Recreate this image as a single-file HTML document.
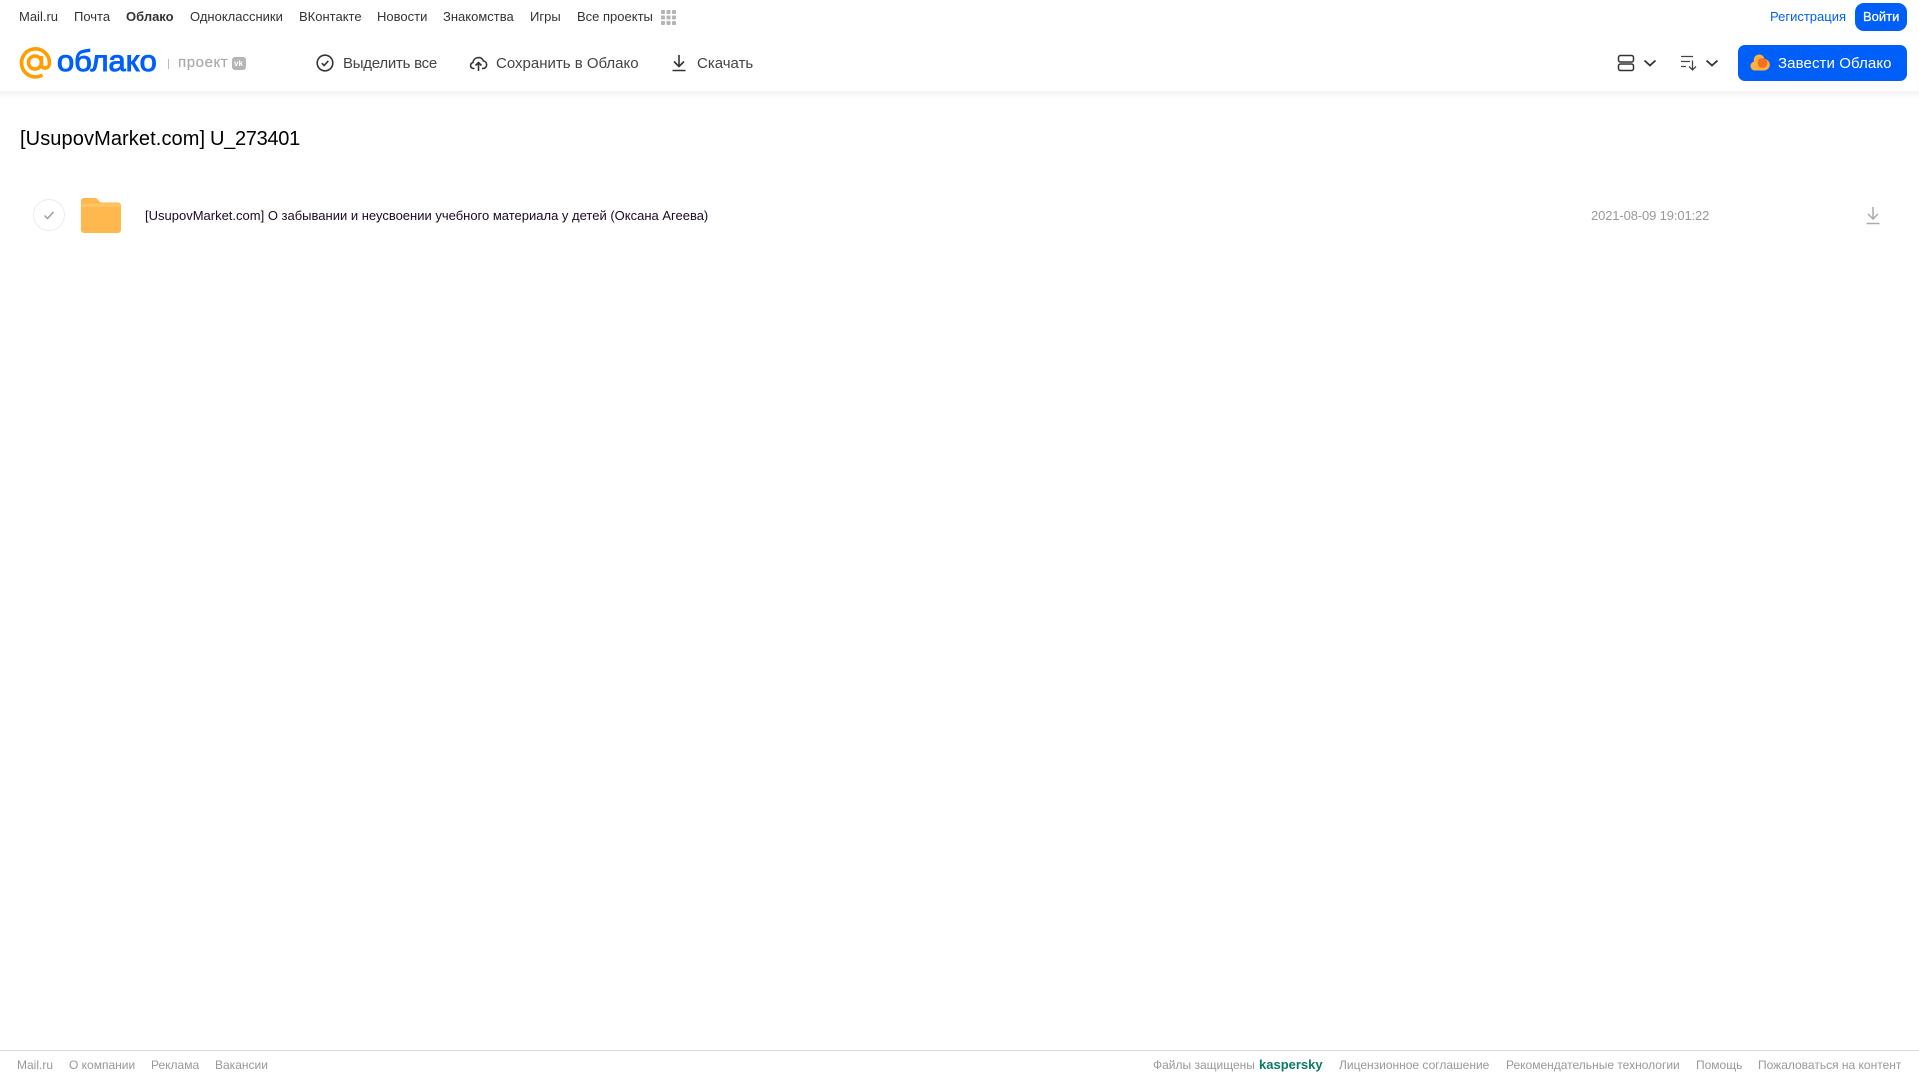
<!DOCTYPE html>
<html lang="ru">
<head>
<meta charset="utf-8">
<title>[UsupovMarket.com] U_273401</title>
<style>
html,body{margin:0;padding:0;background:#fff;width:1919px;height:1079px;overflow:hidden;font-family:"Liberation Sans",sans-serif}
.t{position:absolute;white-space:nowrap;line-height:20px;height:20px}
.n{top:7px;font-size:13px;color:#333}
.b{top:54px;font-size:15px;color:#444;letter-spacing:0}
.f{top:1055px;font-size:12px;color:#999}
svg{position:absolute;display:block}
#sh{position:absolute;left:0;top:91px;width:1919px;height:8px;background:linear-gradient(#f3f3f3,#fff)}
#line{position:absolute;left:0;top:1050px;width:1919px;height:1px;background:#d8d8d8}
.btn{position:absolute;background:#005ff9}
</style>
</head>
<body>
<div id="sh"></div>

<span class="t n" style="left:19px">Mail.ru</span>
<span class="t n" style="left:74px">Почта</span>
<span class="t n" style="left:126px;font-weight:bold">Облако</span>
<span class="t n" style="left:190px">Одноклассники</span>
<span class="t n" style="left:299px">ВКонтакте</span>
<span class="t n" style="left:377px">Новости</span>
<span class="t n" style="left:443px">Знакомства</span>
<span class="t n" style="left:530px">Игры</span>
<span class="t n" style="left:577px">Все проекты</span>
<svg style="left:661px;top:10px" width="15" height="15" viewBox="0 0 15 15" fill="#b4b4b4"><rect x="0" y="0" width="4" height="4" rx="1"/><rect x="5.500" y="0" width="4" height="4" rx="1"/><rect x="11" y="0" width="4" height="4" rx="1"/><rect x="0" y="5.500" width="4" height="4" rx="1"/><rect x="5.500" y="5.500" width="4" height="4" rx="1"/><rect x="11" y="5.500" width="4" height="4" rx="1"/><rect x="0" y="11" width="4" height="4" rx="1"/><rect x="5.500" y="11" width="4" height="4" rx="1"/><rect x="11" y="11" width="4" height="4" rx="1"/></svg>

<span class="t n" style="left:1770px;color:#005ff9">Регистрация</span>
<div class="btn" style="left:1855px;top:3px;width:52px;height:28px;border-radius:9px"></div>
<span class="t" style="left:1863px;top:7px;font-size:13px;color:#fff;-webkit-text-stroke:.25px #fff">Войти</span>

<svg style="left:19px;top:46px" width="33" height="34" viewBox="0 0 33 34" fill="none" stroke="#ff9e00" stroke-width="3.600"><circle cx="16" cy="16.500" r="6.500"/><path d="M22.500 10v8.500c0 5 8 5 8-1.500A14 14 0 1 0 23.500 29"/></svg>
<span class="t" style="left:57px;top:44px;height:36px;line-height:36px;font-size:30px;color:#005ff9;-webkit-text-stroke:1px #005ff9;transform:scaleX(1.03);transform-origin:0 50%">облако</span>
<div style="position:absolute;left:168px;top:59px;width:1px;height:10px;background:#bbb"></div>
<span class="t" style="left:178px;top:53px;font-size:15px;color:#aaa;letter-spacing:.6px;-webkit-text-stroke:.2px #aaa">проект</span>
<div style="position:absolute;left:232px;top:57px;width:14px;height:13px;border-radius:3px;background:#b5b5b5"></div>
<span class="t" style="left:234px;top:54px;font-size:8px;font-weight:bold;color:#fff">vk</span>

<svg style="left:316px;top:54px" width="18" height="18" viewBox="0 0 18 18" fill="none" stroke="#333" stroke-width="1.600"><circle cx="9" cy="9" r="7.800"/><path d="M5.800 9.200l2.300 2.300 4.200-4.600"/></svg>
<span class="t b" style="left:343px;letter-spacing:-.25px">Выделить все</span>

<svg style="left:469px;top:54px" width="19" height="18" viewBox="0 0 19 18" fill="none" stroke="#333" stroke-width="1.600"><path d="M5.500 14.500H4.500C1 14.500.5 9.500 4 8.500 4.500 3 12.500 1.500 14.500 7c4 .5 4.500 7-.5 7.500h-1"/><path d="M9.500 17V9M6.500 11.500l3-3 3 3"/></svg>
<span class="t b" style="left:496px">Сохранить в Облако</span>

<svg style="left:671px;top:54px" width="16" height="18" viewBox="0 0 16 18" fill="none" stroke="#333" stroke-width="1.600"><path d="M8 1v11M3 7.500l5 5 5-5M1.500 16.500h13"/></svg>
<span class="t b" style="left:697px">Скачать</span>

<svg style="left:1617px;top:54px" width="18" height="18" viewBox="0 0 18 18" fill="none" stroke="#333" stroke-width="1.500"><rect x="1.500" y="1.500" width="15" height="6.500" rx="2"/><rect x="1.500" y="10" width="15" height="6.500" rx="2"/></svg>
<svg style="left:1643px;top:59px" width="14" height="9" viewBox="0 0 14 9" fill="none" stroke="#333" stroke-width="1.800"><path d="M1.500 1.500L7 6.500l5.500-5"/></svg>
<svg style="left:1680px;top:54px" width="18" height="18" viewBox="0 0 18 18" fill="none" stroke="#444" stroke-width="1.300"><path d="M1 2.500h12M1 7.500h9M1 12.500h5M12.500 6.500v9.500M9 12.500l3.500 3.500 3.500-3.500"/></svg>
<svg style="left:1705px;top:59px" width="14" height="9" viewBox="0 0 14 9" fill="none" stroke="#333" stroke-width="1.800"><path d="M1.500 1.500L7 6.500l5.500-5"/></svg>

<div class="btn" style="left:1738px;top:45px;width:169px;height:36px;border-radius:7px"></div>
<svg style="left:1750px;top:54px" width="20" height="17" viewBox="0 0 20 17"><path fill="#ffb13d" d="M5 16.500A4.500 4.500 0 0 1 4 7.600 5.500 5.500 0 0 1 9 0.500c3 0 5 2 5.500 4.500A5.800 5.800 0 0 1 15 16.500z"/><circle cx="12.500" cy="9" r="5" fill="#f46f22"/></svg>
<span class="t" style="left:1778px;top:54px;font-size:15px;color:#fff;letter-spacing:.1px">Завести Облако</span>

<span class="t" style="left:20px;top:127px;height:24px;line-height:24px;font-size:20px;color:#000;letter-spacing:.1px">[UsupovMarket.com]</span>
<span class="t" style="left:210px;top:127px;height:24px;line-height:24px;font-size:20px;color:#000;letter-spacing:-.3px">U_273401</span>

<svg style="left:33px;top:199px" width="32" height="32" viewBox="0 0 32 32" fill="none"><circle cx="16" cy="16" r="15.500" stroke="#ececec"/><path d="M11.500 16.500l3 3 6-6.500" stroke="#999" stroke-width="1.400"/></svg>
<svg style="left:81px;top:198px" width="40" height="35" viewBox="0 0 40 35"><path fill="#ffb84d" d="M0 3a3 3 0 0 1 3-3h10c3 0 4 1.500 5 3 .6 1 1.500 1.500 3 1.500h16a3 3 0 0 1 3 3V32a3 3 0 0 1-3 3H3a3 3 0 0 1-3-3z"/><path fill="#ffc766" d="M0 8.500a3 3 0 0 1 3-3h34a3 3 0 0 1 3 3V9H0z" opacity=".7"/></svg>
<span class="t" style="left:145px;top:206px;font-size:13px;color:#1a0a26">[UsupovMarket.com] О забывании и неусвоении учебного материала у детей (Оксана Агеева)</span>
<span class="t" style="left:1591px;top:206px;font-size:13px;color:#999;letter-spacing:-.13px">2021-08-09 19:01:22</span>
<svg style="left:1865px;top:206px" width="16" height="19" viewBox="0 0 16 19" fill="none" stroke="#aaa" stroke-width="1.500"><path d="M8 1v12M3 8l5 5 5-5M1.500 17.500h13"/></svg>

<div id="line"></div>
<span class="t f" style="left:17px">Mail.ru</span>
<span class="t f" style="left:69px">О компании</span>
<span class="t f" style="left:151px">Реклама</span>
<span class="t f" style="left:215px">Вакансии</span>
<span class="t f" style="left:1153px">Файлы защищены</span>
<span class="t f" style="left:1259px;color:#0b7a64;font-weight:bold;font-size:13px">kaspersky</span>
<span class="t f" style="left:1339px">Лицензионное соглашение</span>
<span class="t f" style="left:1506px">Рекомендательные технологии</span>
<span class="t f" style="left:1696px">Помощь</span>
<span class="t f" style="left:1758px">Пожаловаться на контент</span>
</body>
</html>
